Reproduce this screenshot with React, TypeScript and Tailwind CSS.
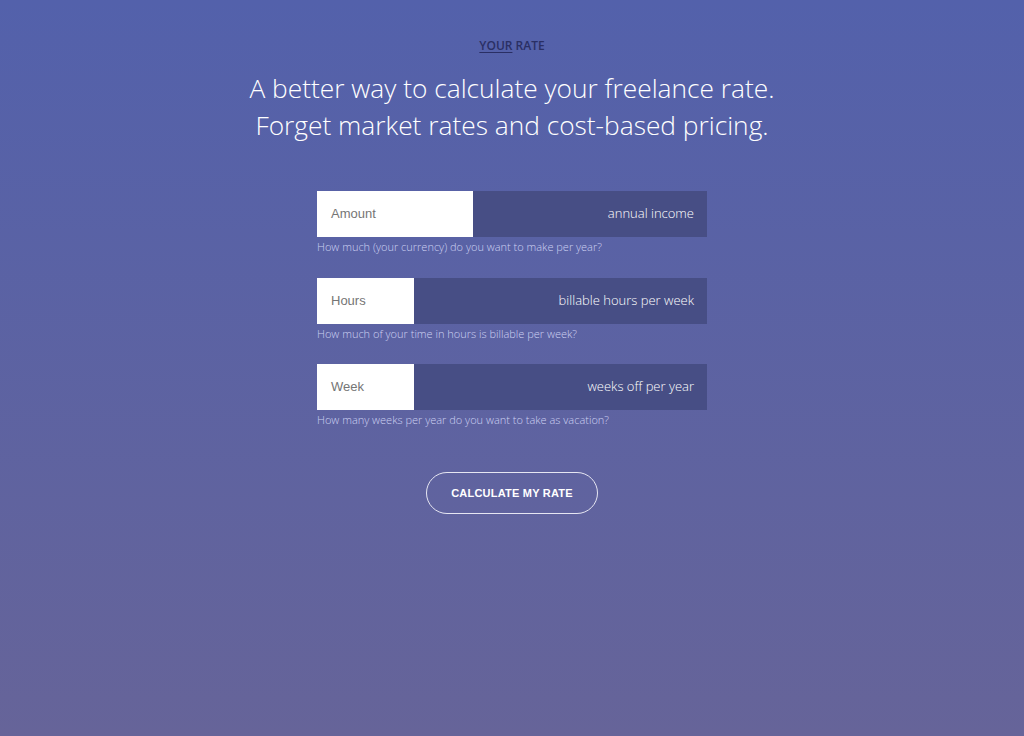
import React from "react";

const rows = [
  { ph: "Amount", w: "w-[156px]", label: "annual income", help: "How much (your currency) do you want to make per year?" },
  { ph: "Hours", w: "w-[97px]", label: "billable hours per week", help: "How much of your time in hours is billable per week?" },
  { ph: "Week", w: "w-[97px]", label: "weeks off per year", help: "How many weeks per year do you want to take as vacation?" },
];

export default function App() {
  return (
    <div className="min-h-[736px] w-full bg-[linear-gradient(to_bottom,#5361ab,#666499)] flex flex-col items-center font-['Open_Sans',sans-serif]">
      <div className="mt-[38px] text-[12px] leading-[16px] font-semibold text-[#2a2f64]">
        <span className="underline underline-offset-2">YOUR</span> RATE
      </div>
      <h1 className="mt-[16px] text-[26.3px] leading-[37px] font-light text-white text-center">
        A better way to calculate your freelance rate.
        <br />
        Forget market rates and cost-based pricing.
      </h1>
      <div className="mt-[47px] w-[390px] flex flex-col gap-[23.5px]">
        {rows.map((r) => (
          <div key={r.ph} className="flex flex-col">
            <div className="flex h-[46px] bg-[#474e85]">
              <div className={`${r.w} bg-white flex items-center pl-[14px] text-[13px] text-[#757575] font-['Liberation_Sans',sans-serif]`}>
                {r.ph}
              </div>
              <div className="flex-1 flex items-center justify-end pr-[13px] text-[13px] font-light text-white">
                {r.label}
              </div>
            </div>
            <div className="mt-[2px] text-[11px] leading-[15px] font-light text-[#cdd1f2]">{r.help}</div>
          </div>
        ))}
      </div>
      <button className="mt-[45px] w-[172px] h-[42px] rounded-full border border-[#e6e6f2] text-white text-[11px] font-bold tracking-[0.02em] font-['Liberation_Sans',sans-serif]">
        CALCULATE MY RATE
      </button>
    </div>
  );
}
